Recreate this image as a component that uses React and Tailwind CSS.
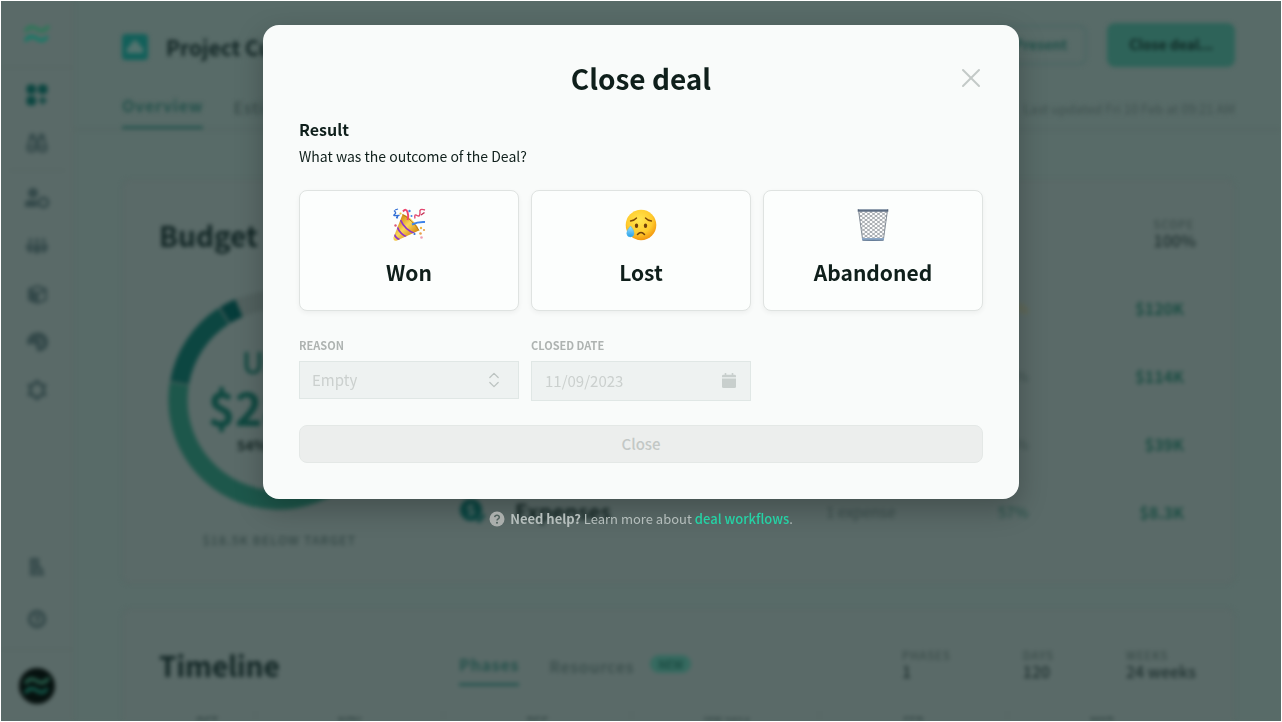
import React from "react";
import { Binoculars, ChevronsUpDown, X } from "lucide-react";
import { FaCube, FaPeopleGroup } from "react-icons/fa6";

function Waves({ className, top, bottom }) {
  return (
    <svg viewBox="0 0 26 20" className={className} fill="none" strokeWidth="3.500" aria-hidden="true">
      <path d="M2 6.500C5 2.500 8 2 12 4.500S19 8.500 24 3" stroke={top} strokeLinecap="round" />
      <path d="M2 16C5 12 8 11.500 12 14S19 18 22.500 13.500" stroke={bottom} strokeLinecap="round" />
    </svg>
  );
}

function GridIcon() {
  return (
    <svg viewBox="0 0 22 22" className="size-[22px]" fill="#0c4641" aria-hidden="true">
      <rect x="0.500" y="0.500" width="9.500" height="9.500" rx="3.500" />
      <rect x="12" y="0.500" width="9.500" height="9.500" rx="3.500" />
      <rect x="0.500" y="12" width="9.500" height="9.500" rx="3.500" />
      <path d="M16.700 13.500v6M13.700 16.500h6" stroke="#0c4641" strokeWidth="2.500" strokeLinecap="round" />
    </svg>
  );
}

function ClientsIcon() {
  return (
    <svg viewBox="0 0 26 22" className="h-[22px] w-[26px]" fill="currentColor" aria-hidden="true">
      <circle cx="9" cy="6" r="5" />
      <path d="M1 20V17Q1 13 5 13H13Q12 17 14 20Z" />
      <circle cx="19.500" cy="15.500" r="4.500" fill="none" stroke="currentColor" strokeWidth="3" />
    </svg>
  );
}

function ReportsIcon() {
  return (
    <svg viewBox="0 0 22 22" className="size-[22px]" fill="currentColor" aria-hidden="true">
      <path d="M1 12A10 10 0 0 1 11 1.500A9.500 9.500 0 0 1 14 20.500Q10 21 10.500 16Q9 11.500 6 13Q1.500 15 1 12Z" />
      <path d="M12.500 7.500A4.500 4.500 0 0 1 14 15.500" fill="none" stroke="#5a6a68" strokeWidth="1.500" />
    </svg>
  );
}

function SettingsIcon() {
  return (
    <svg viewBox="0 0 22 22" className="size-[22px]" fill="none" stroke="currentColor" aria-hidden="true">
      <path d="M11 3L17.500 7V15L11 19L4.500 15V7Z" strokeWidth="3.500" />
      <path d="M11 0.500V4M11 18V21.500M1.500 5.500L5 7.500M17 14.500L20.500 16.500M1.500 16.500L5 14.500M17 7.500L20.500 5.500" strokeWidth="2.500" />
    </svg>
  );
}

function CompanyIcon() {
  return (
    <svg viewBox="0 0 16 20" className="h-5 w-4" fill="none" stroke="currentColor" strokeWidth="3" aria-hidden="true">
      <path d="M2.500 19V2.500H8.500V10M6.500 19V10H9Q13 10 13.500 19" />
      <path d="M10 19V14" strokeWidth="2" />
      <path d="M3 6.500H9" strokeWidth="2" />
    </svg>
  );
}

function HelpIcon() {
  return (
    <svg viewBox="0 0 20 20" className="size-5" fill="none" stroke="currentColor" aria-hidden="true">
      <circle cx="10" cy="10" r="7.500" strokeWidth="3.500" />
      <path d="M8 8.500Q8 7 10 7T12 8.500T10 11V14" strokeWidth="2.500" />
    </svg>
  );
}

function PartyIcon() {
  return (
    <svg viewBox="0 0 34 34" className="size-[34px]" fill="none" aria-hidden="true">
      <defs>
        <linearGradient id="cone" x1="6" y1="14" x2="20" y2="28" gradientUnits="userSpaceOnUse">
          <stop stopColor="#d9971c" />
          <stop offset="0.450" stopColor="#fbd75a" />
          <stop offset="1" stopColor="#d68e16" />
        </linearGradient>
        <clipPath id="coneClip">
          <path d="M10.500 6.500C15 6 26 16.500 27 22.500L5 32.500Q1 33.500 1.500 29.500Z" />
        </clipPath>
      </defs>
      <path d="M10.500 6.500C15 6 26 16.500 27 22.500L5 32.500Q1 33.500 1.500 29.500Z" fill="url(#cone)" />
      <g clipPath="url(#coneClip)" stroke="#8e35c9" strokeWidth="1.800">
        <path d="M8.500 12Q13 22 23 25.500" />
        <path d="M5 18.500Q8 26.500 16 29.500" />
        <path d="M2 25.500Q3.500 30.500 8.500 32" />
      </g>
      <path d="M10.500 6.500C17 10 23 16 27 22.500" stroke="#b87916" strokeWidth="1" />
      <path d="M11 3.500Q14 0 15.500 4T15.500 12" stroke="#ee466d" strokeWidth="2" />
      <path d="M20 16.500Q26 13.500 33 14" stroke="#3d83ea" strokeWidth="2" />
      <path d="M2 2.500Q5 5 2.500 6.500T6.500 7.500Q3 10.500 6 9.500" stroke="#3470d5" strokeWidth="1.400" />
      <path d="M3 2L6 1" stroke="#3470d5" strokeWidth="1.300" />
      <path d="M23 10.500Q22 5.500 25 7.500T28 4.500Q27 0 33 2" stroke="#e34770" strokeWidth="1.400" />
      <path d="M29 7L32.500 4.500" stroke="#c42f54" strokeWidth="1.400" />
      <circle cx="17.500" cy="3" r="1.200" fill="#3d83ea" />
      <circle cx="19.500" cy="8" r="1" fill="#3d83ea" />
      <circle cx="8.500" cy="5.500" r="1.100" fill="#f4c636" />
      <circle cx="3.500" cy="17.500" r="1.200" fill="#dd5a75" />
      <circle cx="22.500" cy="26" r="1.100" fill="#3470d5" />
      <circle cx="29" cy="20" r="1.200" fill="#eeb945" />
      <circle cx="28.500" cy="25.500" r="1.300" fill="#e7a04b" />
      <circle cx="32" cy="22" r="1.100" fill="#e7a04b" />
      <circle cx="29.500" cy="29.500" r="1.300" fill="#ef9db2" />
    </svg>
  );
}

function SadIcon() {
  return (
    <svg viewBox="0 0 34 34" className="size-[34px]" fill="none" aria-hidden="true">
      <defs>
        <radialGradient id="face" cx="0.450" cy="0.350" r="0.700">
          <stop stopColor="#ffe650" />
          <stop offset="0.600" stopColor="#ffcb2d" />
          <stop offset="1" stopColor="#f08b09" />
        </radialGradient>
        <linearGradient id="tear" x1="0" y1="0" x2="0" y2="1">
          <stop stopColor="#a4e4ff" />
          <stop offset="1" stopColor="#27a0e8" />
        </linearGradient>
      </defs>
      <circle cx="17" cy="17" r="15.300" fill="url(#face)" />
      <path d="M6.500 13Q10.500 12.500 12.500 10M27.500 13Q23.500 12.500 21.500 10" stroke="#7c4606" strokeWidth="1.300" strokeLinecap="round" />
      <ellipse cx="12.500" cy="17.700" rx="1.700" ry="2.300" fill="#71400a" />
      <ellipse cx="21.500" cy="17.700" rx="1.700" ry="2.300" fill="#71400a" />
      <path d="M13.500 26.500Q17 22.500 20.500 26.500" stroke="#71400a" strokeWidth="1.500" strokeLinecap="round" />
      <path d="M6.500 18Q10 22 10 25.300A3.600 3.600 0 0 1 2.800 25.300Q2.800 22 6.500 18Z" fill="url(#tear)" stroke="#4bb6ee" strokeWidth="0.500" />
    </svg>
  );
}

function BasketIcon() {
  return (
    <svg viewBox="0 0 34 34" className="size-[34px]" fill="none" aria-hidden="true">
      <defs>
        <pattern id="mesh" width="5" height="4" patternUnits="userSpaceOnUse">
          <path d="M0 0L5 4M5 0L0 4" stroke="#5f6871" strokeWidth="0.600" />
        </pattern>
      </defs>
      <path d="M2.500 3.500H31.500L27.500 31.500H6.500Z" fill="#fdfdfd" />
      <path d="M2.500 3.500H31.500L27.500 31.500H6.500Z" fill="url(#mesh)" />
      <path d="M2.700 3.500L6.500 31M31.300 3.500L27.500 31" stroke="#7b8590" strokeWidth="0.900" />
      <path d="M1.700 1.200H32.300V3.700H1.700Z" fill="#54647a" />
      <path d="M3 1.700H31" stroke="#a8b6c5" strokeWidth="0.700" />
      <path d="M6 30H28V32.300Q17 33.500 6 32.300Z" fill="#8ba6c5" />
      <path d="M6.500 32.300H27.500" stroke="#4f6580" strokeWidth="0.800" />
    </svg>
  );
}

function CalendarIcon() {
  return (
    <svg viewBox="0 0 14 16" className="h-4 w-[14px]" fill="#c8cfcd" aria-hidden="true">
      <path d="M0 5.500H14V13.500Q14 15 12.500 15H1.500Q0 15 0 13.500Z" />
      <path d="M0 4.300V3Q0 1.700 1.500 1.700H2.700V0H4.300V1.700H9.700V0H11.300V1.700H12.500Q14 1.700 14 3V4.300Z" />
    </svg>
  );
}

function Donut() {
  const r = 100;
  const c = 2 * Math.PI * r;
  const parts = [
    { color: "#1d574b", from: 70, to: 279 },
    { color: "#0c4641", from: 280, to: 327 },
    { color: "#053c3a", from: 328, to: 337 },
  ];
  return (
    <svg viewBox="0 0 220 220" className="col-start-1 row-start-1 size-[220px]" fill="none" strokeWidth="19" aria-hidden="true">
      <circle cx="110" cy="110" r={r} stroke="#52615f" />
      {parts.map((p) => (
        <circle
          key={p.color}
          cx="110"
          cy="110"
          r={r}
          stroke={p.color}
          strokeDasharray={`${((p.to - p.from) / 360) * c} ${c}`}
          transform={`rotate(${p.from - 90} 110 110)`}
        />
      ))}
    </svg>
  );
}

function Sidebar() {
  return (
    <nav className="flex w-[73px] shrink-0 flex-col items-center border-r border-[#566562] bg-[#5a6a68] text-[#34494a]">
      <a href="#home" aria-label="Home" className="flex h-[67px] w-full items-center justify-center border-b border-[#53635f]">
        <Waves className="h-5 w-[26px]" top="#2a7858" bottom="#127a66" />
      </a>
      <a href="#dashboard" aria-label="Dashboard" className="mt-[15px] flex h-6 items-center">
        <GridIcon />
      </a>
      <a href="#explore" aria-label="Explore" className="mt-6 flex h-6 items-center">
        <Binoculars size={22} strokeWidth={2.5} />
      </a>
      <div className="mt-[15px] h-px w-14 bg-[#53635f]" />
      <div className="mt-[15px] flex flex-col items-center gap-6">
        <a href="#clients" aria-label="Clients" className="flex h-6 items-center">
          <ClientsIcon />
        </a>
        <a href="#team" aria-label="Team" className="flex h-6 items-center">
          <FaPeopleGroup size={22} />
        </a>
        <a href="#products" aria-label="Products" className="flex h-6 items-center">
          <FaCube size={19} />
        </a>
        <a href="#reports" aria-label="Reports" className="flex h-6 items-center">
          <ReportsIcon />
        </a>
        <a href="#settings" aria-label="Settings" className="flex h-6 items-center">
          <SettingsIcon />
        </a>
      </div>
      <div className="mt-auto flex flex-col items-center gap-8">
        <a href="#company" aria-label="Company">
          <CompanyIcon />
        </a>
        <a href="#help" aria-label="Help">
          <HelpIcon />
        </a>
      </div>
      <div className="mt-5 flex h-[72px] w-full items-center justify-center border-t border-[#53635f]">
        <div className="flex size-9 items-center justify-center rounded-full bg-[#06110f]">
          <Waves className="h-5 w-[26px]" top="#265c4a" bottom="#14594b" />
        </div>
      </div>
    </nav>
  );
}

function Header() {
  return (
    <header className="border-b border-[#53635f] pr-[46px] pl-12">
      <div className="flex h-[87px] items-center">
        <div className="flex items-center gap-[18px] pt-1">
          <div className="flex size-[26px] items-center justify-center rounded bg-[#12605a]">
            <svg viewBox="0 0 16 16" className="size-4" fill="#53736f" aria-hidden="true">
              <path d="M8 0L11 4.500H13V8H16V14H0V8H3V4.500H5Z" />
            </svg>
          </div>
          <h1 className="text-[21px] leading-7 font-bold text-[#112524]">Project Custom</h1>
        </div>
        <button className="ml-auto h-10 rounded-lg border-2 border-[#4b6663] px-[18px] text-[14px] font-bold text-[#205049]">Present</button>
        <button className="ml-5 h-11 rounded-lg bg-[#2e6359] px-[22px] text-[14px] font-bold text-[#0f2824]">Close deal...</button>
      </div>
      <div className="flex h-[41px] items-stretch">
        <a href="#overview" className="flex items-center border-b-3 border-[#275550] pb-1 text-[16px] font-bold tracking-wider text-[#24514b]">Overview</a>
        <a href="#estimate" className="ml-[30px] flex items-center pb-1 text-[16px] font-medium tracking-wider text-[#394d4b]">Estimate</a>
        <p className="ml-auto flex items-center text-[13px] text-[#3f514f]">Last updated Fri 10 Feb at 09:21 AM</p>
      </div>
    </header>
  );
}

function Stat({ label, value }) {
  return (
    <div>
      <p className="text-[11px] leading-4 font-medium tracking-widest text-[#394b48]">{label}</p>
      <p className="text-[16px] leading-4 font-medium text-[#1e302f]">{value}</p>
    </div>
  );
}

const rows = [
  { name: "Budget", note: "", percent: "94%", value: "$120K", tone: "text-[#6b6943]" },
  { name: "Services", note: "", percent: "47%", value: "$114K", tone: "text-[#3f5250]" },
  { name: "Labour", note: "", percent: "32%", value: "$39K", tone: "text-[#3f5250]" },
  { name: "Expenses", note: "1 expense", percent: "57%", value: "$8.3K", tone: "text-[#235048]" },
];

function BudgetCard() {
  return (
    <section className="flex h-[405px] rounded-lg border border-[#556562] bg-[#5a6a68] pt-9 pr-[38px] pl-9">
      <div className="shrink-0">
        <h2 className="text-[28px] leading-[38px] font-bold text-[#112524]">Budget</h2>
        <div className="mt-9 ml-[9px] grid w-[220px] place-items-center">
          <Donut />
          <div className="col-start-1 row-start-1 text-center text-[#0f4840]">
            <p className="text-[30px] leading-10 font-medium">Used</p>
            <p className="text-[46px] leading-[50px] font-bold">$282K</p>
            <p className="text-[14px] leading-7 font-bold text-[#142725]">54% budget</p>
          </div>
        </div>
        <p className="mt-[22px] ml-3 text-center text-[12px] leading-4 font-medium tracking-widest text-[#334745]">$18.5K BELOW TARGET</p>
      </div>
      <div className="ml-[71px] flex-1">
        <div className="flex justify-end">
          <Stat label="SCOPE" value="100%" />
        </div>
        <div className="mt-[26px] pr-3">
          {rows.map((row) => (
            <div key={row.name} className="flex h-[68px] items-center text-[15px]">
              <svg viewBox="0 0 28 28" className="size-7" fill="#0b4743" aria-hidden="true">
                <circle cx="12" cy="12" r="11" />
                <path d="M17 23L25 15L27 18L20 26Z" stroke="#5a6a68" />
                <path d="M15 8.500Q12 6.500 9.500 8.500T12 12T14.500 15.500T9 16M12 5.500V18.500" fill="none" stroke="#426562" strokeWidth="2" />
              </svg>
              <span className="ml-7 flex-1 text-[21px] font-bold text-[#142725]">{row.name}</span>
              <span className="w-[172px] text-[#394d4b]">{row.note}</span>
              <span className={`w-[50px] ${row.tone}`}>{row.percent}</span>
              <span className="w-[136px] text-right text-[16px] font-bold text-[#1b4d43]">{row.value}</span>
            </div>
          ))}
        </div>
      </div>
    </section>
  );
}

const months = ["OCT", "NOV", "DEC", "JAN 2024", "FEB", "MAR"];

function TimelineCard() {
  return (
    <section className="rounded-lg border border-[#556562] bg-[#5a6a68] pt-9 pr-[38px] pl-9">
      <div className="flex h-[42px] items-start">
        <h2 className="w-[300px] text-[28px] leading-10 font-bold text-[#112524]">Timeline</h2>
        <div className="flex h-[41px] items-stretch text-[16px] tracking-wider">
          <a href="#phases" className="flex items-center border-b-3 border-[#275550] font-bold text-[#24514b]">Phases</a>
          <a href="#resources" className="ml-[30px] flex items-center font-medium text-[#394d4b]">Resources</a>
        </div>
        <span className="mt-2.5 ml-4 rounded-full bg-[#366a60] px-2 text-[11px] leading-[18px] font-bold text-[#1a4b41]">NEW</span>
        <div className="mt-0.5 ml-auto flex gap-[72px]">
          <Stat label="PHASES" value="1" />
          <Stat label="DAYS" value="120" />
          <Stat label="WEEKS" value="24 weeks" />
        </div>
      </div>
      <div className="mt-6 grid grid-cols-[97px_repeat(5,1fr)] divide-x divide-[#526360] text-center text-[11px] leading-4 font-medium text-[#263b39]">
        {months.map((m) => (
          <div key={m} className="pt-0.5">{m}</div>
        ))}
      </div>
    </section>
  );
}

const outcomes = [
  { label: "Won", icon: PartyIcon },
  { label: "Lost", icon: SadIcon },
  { label: "Abandoned", icon: BasketIcon },
];

function CloseDealDialog() {
  return (
    <div role="dialog" aria-modal="true" aria-labelledby="dialog-title" className="w-[756px] max-w-full rounded-2xl bg-[#f9fbfa] px-9 pt-[35px] pb-9 text-[#0f1f1b] shadow-[0_10px_28px_rgba(0,0,0,0.25)]">
      <div className="grid h-9 grid-cols-[36px_1fr_36px] items-center">
        <h2 id="dialog-title" className="col-start-2 text-center text-[28px] leading-8 font-bold">Close deal</h2>
        <button aria-label="Dismiss" className="-mr-1 flex justify-end text-[#c3c9c7]">
          <X size={32} strokeWidth={1.5} />
        </button>
      </div>
      <h3 className="mt-5 text-[16px] leading-[26px] font-bold">Result</h3>
      <p className="text-[14px] leading-7">What was the outcome of the Deal?</p>
      <div className="mt-5 grid grid-cols-3 gap-3">
        {outcomes.map(({ label, icon: Icon }) => (
          <button key={label} className="flex h-[121px] flex-col items-center rounded-lg border border-[#dfe3e1] bg-[#fcfefd] pt-[17px] shadow-[0_2px_5px_rgba(0,0,0,0.05)]">
            <Icon />
            <span className="mt-3 text-[21px] leading-9 font-bold">{label}</span>
          </button>
        ))}
      </div>
      <div className="mt-6 grid grid-cols-3 items-start gap-3">
        <div>
          <label htmlFor="reason" className="block text-[11px] leading-5 font-bold text-[#aeb3b1]">REASON</label>
          <div className="mt-1.5 grid items-center">
            <select id="reason" disabled className="col-start-1 row-start-1 h-[38px] w-full appearance-none border border-[#e0e7e5] bg-[#eef2f1] px-3 text-[15px] text-[#cbd0ce] opacity-100">
              <option>Empty</option>
            </select>
            <ChevronsUpDown size={20} strokeWidth={1.5} className="pointer-events-none col-start-1 row-start-1 mr-[15px] justify-self-end text-[#bcc3c1]" />
          </div>
        </div>
        <div>
          <label htmlFor="closed-date" className="block text-[11px] leading-5 font-bold text-[#aeb3b1]">CLOSED DATE</label>
          <div className="mt-1.5 grid items-center">
            <input id="closed-date" disabled defaultValue="11/09/2023" className="col-start-1 row-start-1 h-10 w-full border border-[#e0e7e5] bg-[#eef2f1] px-[13px] pb-0.5 text-[15px] text-[#cbd0ce]" />
            <span className="pointer-events-none col-start-1 row-start-1 mr-[15px] justify-self-end">
              <CalendarIcon />
            </span>
          </div>
        </div>
      </div>
      <button disabled className="mt-6 h-[38px] w-full rounded-lg border border-[#e4e8e6] bg-[#eceeed] text-[15px] font-medium text-[#c3c8c6]">Close</button>
    </div>
  );
}

export default function App() {
  return (
    <div className="h-screen overflow-hidden bg-white p-px font-['Noto_Sans_CJK_SC','Open_Sans',sans-serif]">
      <div className="h-full overflow-hidden bg-[#586b68]">
        <div className="flex h-full blur-[2px]" aria-hidden="true">
          <Sidebar />
          <main className="flex min-w-0 flex-1 flex-col overflow-hidden">
            <Header />
            <div className="flex flex-col gap-6 pt-[49px] pr-[46px] pl-12">
              <BudgetCard />
              <TimelineCard />
            </div>
          </main>
        </div>
      </div>
      <div className="fixed inset-0 flex flex-col items-center pt-[25px]">
        <CloseDealDialog />
        <p className="mt-2.5 flex items-center text-[13px] leading-5 text-[#b5bebc]">
          <svg viewBox="0 0 16 16" className="mr-[5px] size-4" aria-hidden="true">
            <circle cx="8" cy="8" r="7.500" fill="#aaaeac" />
            <path d="M5.700 6.200Q5.900 4.300 8 4.300T10.300 6.200Q10.300 7.200 9.200 7.900T8 9.500" fill="none" stroke="#50615d" strokeWidth="1.500" />
            <circle cx="8" cy="11.700" r="1" fill="#50615d" />
          </svg>
          <span>
            <strong className="font-bold">Need help?</strong> Learn more about{" "}
            <a href="#deal-workflows" className="font-medium text-[#25d3a6]">deal workflows</a>.
          </span>
        </p>
      </div>
    </div>
  );
}
